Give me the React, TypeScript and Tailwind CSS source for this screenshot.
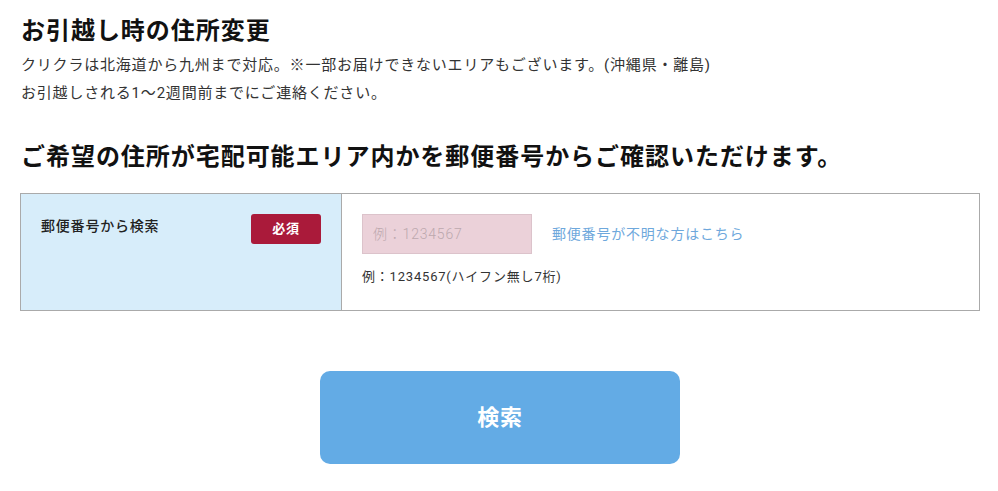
const font = "font-['Roboto','Noto_Sans_CJK_JP',sans-serif]";

const PostalSearch = () => {
  return (
    <div className={`${font} w-full bg-white text-[#333] tracking-[0.05em]`}>
      <div className="ml-[20px] w-[960px] pt-[13px]">
        <h1 className="pl-[1px] text-[24px] font-bold leading-[36px] tracking-[0.04em] text-[#111]">
          お引越し時の住所変更
        </h1>
        <p className="mt-[2px] pl-[1px] text-[15px] leading-[28px]">
          クリクラは北海道から九州まで対応。※一部お届けできないエリアもございます。(沖縄県・離島)
          <br />
          お引越しされる1〜2週間前までにご連絡ください。
        </p>

        <h2 className="mt-[32px] pl-[1px] text-[24px] font-bold leading-[36px] tracking-[0.04em] text-[#111]">
          ご希望の住所が宅配可能エリア内かを郵便番号からご確認いただけます。
        </h2>

        <div className="mt-[18px] flex border border-[#aaaaaa]">
          <div className="flex w-[321px] shrink-0 items-start justify-between border-r border-[#aaaaaa] bg-[#d7edfa] p-5">
            <span className="mt-[2px] text-[14px] font-medium leading-[21px] text-[#222]">
              郵便番号から検索
            </span>
            <span className="flex h-[30px] w-[70px] items-center justify-center rounded-[3px] bg-[#aa1a3a] text-[13px] font-bold text-white">
              必須
            </span>
          </div>
          <div className="flex-1 px-5 pt-5 pb-[23px]">
            <div className="flex items-center">
              <input
                type="text"
                placeholder="例：1234567"
                className="h-[40px] w-[170px] border border-[#dcc3cb] bg-[#ebd1d9] px-[10px] text-[14px] font-light outline-none placeholder:text-[#bca8ae]"
              />
              <a href="#" className="ml-[20px] text-[14px] text-[#6ea8dc]">
                郵便番号が不明な方はこちら
              </a>
            </div>
            <p className="mt-[12px] text-[13px] leading-[21px] text-[#333]">
              例：1234567(ハイフン無し7桁)
            </p>
          </div>
        </div>

        <button className="mx-auto mt-[60px] flex h-[93px] w-[360px] items-center justify-center rounded-[10px] bg-[#63abe5] text-[22px] font-bold text-white">
          検索
        </button>
      </div>
    </div>
  );
};

export default function App() {
  return <PostalSearch />;
}
